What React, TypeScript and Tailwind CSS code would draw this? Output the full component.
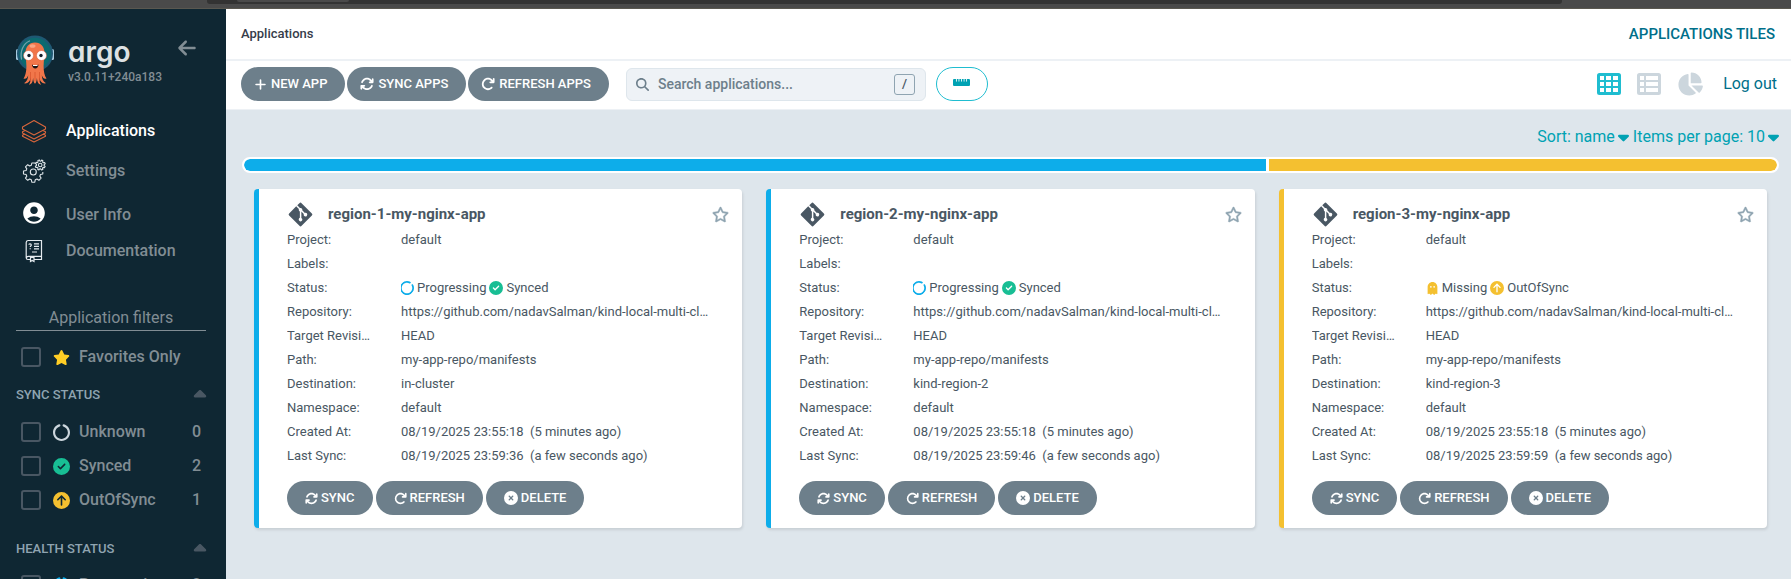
import { useState, type ReactNode } from 'react';
import { FaPlus, FaArrowsRotate, FaArrowRotateRight, FaCircleXmark, FaCircleCheck, FaCircleArrowUp, FaGhost, FaStar, FaRegStar, FaChartPie, FaCircleNotch, FaMagnifyingGlass, FaArrowLeft, FaCaretUp, FaCaretDown, FaRulerHorizontal, FaGitAlt } from 'react-icons/fa6';
import { MdAccountCircle } from 'react-icons/md';

function ArgoMascot() {
  return (
    <svg viewBox="0 0 40 52" className="h-[52px] w-10 shrink-0" aria-hidden="true">
      <rect x="1" y="15" width="4" height="11" rx="1.5" fill="#a9cbe0" />
      <rect x="35" y="15" width="4" height="11" rx="1.5" fill="#a9cbe0" />
      <circle cx="20" cy="19.500" r="18" fill="#1f5873" />
      <circle cx="20" cy="19.500" r="15.800" fill="#0c6a70" />
      <path d="M6.500 25C4.800 17 8.500 9.500 14.500 7" stroke="#6fa3ad" strokeWidth="1.300" fill="none" strokeLinecap="round" />
      <path d="M20 8.500c-6 0-9.500 4.500-9.500 10.500 0 5 .8 8 .9 13 .1 5-1 10-2.900 12.500 2.500.8 4-.8 4.700-3.200-.2 3.600-1.300 6.200-4.200 8 3.800.6 6-1.500 6.800-6 0 3.500-.6 5.600-1.900 7.500 2.700-.3 3.900-3 4.200-7 .2 2.600.5 5 1.900 6 1.400-1 1.700-3.400 1.900-6 .3 4 1.500 6.700 4.200 7-1.300-1.900-1.900-4-1.900-7.500.8 4.500 3 6.600 6.800 6-2.900-1.800-4-4.400-4.200-8 .7 2.400 2.200 4 4.700 3.200-1.900-2.500-3-7.500-2.900-12.500.1-5 .9-8 .9-13 0-6-3.500-10.500-9.500-10.500z" fill="#f1764a" />
      <ellipse cx="17.500" cy="12" rx="3" ry="1.800" fill="#f8a583" />
      <path d="M15.500 38v9M20 38v9M24.500 38v9" stroke="#d9552f" strokeWidth=".8" />
      <circle cx="13.500" cy="21.500" r="5" fill="#fff" stroke="#d9552f" strokeWidth=".5" />
      <circle cx="26.500" cy="21.500" r="5" fill="#fff" stroke="#d9552f" strokeWidth=".5" />
      <circle cx="14" cy="21.500" r="1.700" fill="#15202b" />
      <circle cx="26" cy="21.500" r="1.700" fill="#15202b" />
      <path d="M17 30.500c2 1.200 4.500 1.200 6.500 0-.3 2.600-1.500 4-3.200 4s-3-1.400-3.300-4z" fill="#1b1416" />
      <path d="M18 31h4.500v1H18z" fill="#fff" />
    </svg>
  );
}

function LayersIcon() {
  return (
    <svg viewBox="0 0 26 24" className="h-6 w-[26px]" fill="none" stroke="#d9663c" strokeWidth="1.100" strokeLinejoin="round" aria-hidden="true">
      <path d="M13 1.500 24.500 8v2L13 16 1.500 10V8z" />
      <path d="M4 11.500 1.500 12.800V14L13 20l11.500-6v-1.200L22 11.500" />
      <path d="M4 15 1.500 16.300v1L13 23l11.500-5.700v-1L22 15" />
    </svg>
  );
}

function GearsIcon() {
  return (
    <svg viewBox="0 0 24 24" className="size-6" fill="none" stroke="#dfe6ea" strokeWidth="1.100" strokeLinejoin="round" aria-hidden="true">
      <path d="M13.500 4.500 12.800 4 9.800 4l-.5 2.300-1.600.7-2-1.300-2.200 2.200 1.300 2-.7 1.600-2.600.5v3l2.600.5.700 1.600-1.300 2 2.200 2.200 2-1.300 1.600.7.500 2.500h3l.5-2.500 1.600-.7 2 1.300 2.200-2.200-1.300-2 .7-1.600 2.300-.5v-2" />
      <circle cx="11.300" cy="13" r="3" />
      <path d="m17.500 1 .4 1.200 1 .1L19.700 1l1.200.7-.3 1.300.7.700 1.300-.2.600 1.300-1.100.8v1l1 .8-.6 1.200-1.300-.2-.7.700.3 1.300-1.300.6-.8-1.100h-1l-.8 1-1.200-.6.300-1.300-.8-.7-1.300.2-.5-1.300 1.100-.8v-1l-1-.8.600-1.200 1.300.2.700-.7-.2-1.300z" />
      <circle cx="18.200" cy="6" r="1.800" />
    </svg>
  );
}

function DocsIcon() {
  return (
    <svg viewBox="0 0 18 24" className="h-6 w-[18px]" fill="none" stroke="#e4eaee" strokeWidth="1.200" aria-hidden="true">
      <path d="M6 20.500H3a1.800 1.800 0 0 1-1.800-1.800V3.500A2 2 0 0 1 3 1.500h13.500v19H9M1.500 19c0-1 .7-1.700 1.700-1.700h13.300" />
      <path d="M5.500 18.500v4l1.700-1 1.800 1v-4z" />
      <path d="M9 4.800h5M9 7.300h5M9 9.800h5M7 13h5" />
      <path d="M4 5.800c0-1.300 2.300-1.300 2.300.2 0 1-1.100.9-1.100 2.100M5.200 9.300v1" />
    </svg>
  );
}

function GridIcon() {
  return (
    <svg viewBox="0 0 24 22" className="h-[22px] w-6" aria-hidden="true">
      <path fillRule="evenodd" fill="currentColor" d="M2.500 0h19A2.500 2.500 0 0 1 24 2.500v17a2.500 2.500 0 0 1-2.500 2.500h-19A2.500 2.500 0 0 1 0 19.500v-17A2.500 2.500 0 0 1 2.500 0zM3 3v4h4V3zM9 3v4h5V3zM16 3v4h5V3zM3 9v4h4V9zM9 9v4h5V9zM16 9v4h5V9zM3 15v4h4v-4zM9 15v4h5v-4zM16 15v4h5v-4z" />
    </svg>
  );
}

function ListIcon() {
  return (
    <svg viewBox="0 0 24 22" className="h-[22px] w-6" aria-hidden="true">
      <path fillRule="evenodd" fill="currentColor" d="M2.500 0h19A2.500 2.500 0 0 1 24 2.500v17a2.500 2.500 0 0 1-2.500 2.500h-19A2.500 2.500 0 0 1 0 19.500v-17A2.500 2.500 0 0 1 2.500 0zM3 3v4h4V3zM9 3v4h12V3zM3 9v4h4V9zM9 9v4h12V9zM3 15v4h4v-4zM9 15v4h12v-4z" />
    </svg>
  );
}

function NavItem({ icon, label, active, className }: { icon: ReactNode; label: string; active?: boolean; className: string }) {
  return (
    <a href="#" className={`flex items-center ${className} ${active ? 'text-white' : 'text-[#818d94]'}`}>
      <span className="flex w-9 shrink-0 justify-center">{icon}</span>
      <span className="ml-[14px]">{label}</span>
    </a>
  );
}

function FilterRow({ icon, label, count }: { icon: ReactNode; label: string; count?: number }) {
  return (
    <label className="flex h-[34px] items-center pr-[5px] pl-[5px]">
      <input type="checkbox" className="size-5 shrink-0 appearance-none rounded-[3px] border-2 border-[#495763] checked:bg-[#495763]" />
      <span className="ml-3 flex w-[17px] shrink-0 justify-center">{icon}</span>
      <span className="ml-[9px] flex-1">{label}</span>
      {count !== undefined && <span>{count}</span>}
    </label>
  );
}

function SectionTitle({ children }: { children: ReactNode }) {
  return (
    <button type="button" className="flex h-6 w-full items-center justify-between text-[13px] text-[#8fa4b1]">
      {children}
      <FaCaretUp className="-mr-1 size-5 text-[#495763]" />
    </button>
  );
}

function Sidebar() {
  return (
    <aside className="w-[226px] shrink-0 overflow-hidden bg-[#0f2733] pr-5 pl-4 text-[16px] leading-5 font-medium text-[#818d94]">
      <div className="flex pt-[25px]">
        <div className="-ml-px">
          <ArgoMascot />
        </div>
        <div className="ml-[13px] flex-1">
          <div className="mt-[2px] h-8 font-[Inter,sans-serif] text-[28px] leading-8 font-semibold text-[#dde1e3] [font-feature-settings:'cv11']">argo</div>
          <div className="mt-px text-[12px] leading-4">v3.0.11+240a183</div>
        </div>
        <button type="button" aria-label="Collapse sidebar" className="mr-[9px] -ml-6 h-7 self-start">
          <FaArrowLeft className="size-5" />
        </button>
      </div>
      <nav className="mt-[25px]">
        <NavItem className="h-10" active icon={<LayersIcon />} label="Applications" />
        <NavItem className="h-10" icon={<GearsIcon />} label="Settings" />
        <NavItem className="h-12" icon={<MdAccountCircle className="mb-1 size-[26px] text-white" />} label="User Info" />
        <NavItem className="h-6" icon={<DocsIcon />} label="Documentation" />
      </nav>
      <h2 className="mt-[45px] border-b border-[#818d94] pb-[2px] text-center font-normal">Application filters</h2>
      <div className="mt-[9px]">
        <FilterRow icon={<FaStar className="size-[17px] text-[#ffce25]" />} label="Favorites Only" />
      </div>
      <section className="mt-[9px]">
        <SectionTitle>SYNC STATUS</SectionTitle>
        <div className="mt-2">
          <FilterRow icon={<FaCircleNotch className="size-[17px] text-[#ccd6dd]" />} label="Unknown" count={0} />
          <FilterRow icon={<FaCircleCheck className="size-[17px] text-[#18be94]" />} label="Synced" count={2} />
          <FilterRow icon={<FaCircleArrowUp className="size-[17px] text-[#f4c030]" />} label="OutOfSync" count={1} />
        </div>
      </section>
      <section className="mt-5">
        <SectionTitle>HEALTH STATUS</SectionTitle>
        <div className="mt-[7px]">
          <FilterRow icon={<FaCircleNotch className="size-[17px] text-[#0dadea]" />} label="Progressing" count={2} />
        </div>
      </section>
    </aside>
  );
}

function ToolButton({ icon, children }: { icon: ReactNode; children: ReactNode }) {
  return (
    <button type="button" className="flex h-[34px] items-center gap-1 rounded-full bg-[#6d7f8b] pr-[18px] pl-[13px] text-[13px] font-medium text-white">
      {icon}
      {children}
    </button>
  );
}

function CardButton({ icon, children }: { icon: ReactNode; children: ReactNode }) {
  return (
    <button type="button" className="flex h-[34px] items-center gap-[3px] rounded-full bg-[#6d7f8b] px-[18px] text-[13px] font-medium text-white">
      {icon}
      {children}
    </button>
  );
}

interface AppInfo {
  name: string;
  healthy: boolean;
  destination: string;
  lastSync: string;
}

const apps: AppInfo[] = [
  { name: 'region-1-my-nginx-app', healthy: true, destination: 'in-cluster', lastSync: '08/19/2025 23:59:36' },
  { name: 'region-2-my-nginx-app', healthy: true, destination: 'kind-region-2', lastSync: '08/19/2025 23:59:46' },
  { name: 'region-3-my-nginx-app', healthy: false, destination: 'kind-region-3', lastSync: '08/19/2025 23:59:59' },
];

function Status({ healthy }: { healthy: boolean }) {
  return healthy ? (
    <span className="flex items-center gap-[3px]">
      <FaCircleNotch className="-ml-px size-[14px] rotate-45 text-[#0dadea]" />
      Progressing
      <FaCircleCheck className="size-[14px] text-[#18be94]" />
      Synced
    </span>
  ) : (
    <span className="flex items-center gap-[3px]">
      <FaGhost className="h-[13px] w-[13px] text-[#f4c030]" />
      Missing
      <FaCircleArrowUp className="size-[14px] text-[#f4c030]" />
      OutOfSync
    </span>
  );
}

function AppCard({ app }: { app: AppInfo }) {
  const [favorite, setFavorite] = useState(false);
  const rows: [string, ReactNode][] = [
    ['Project:', 'default'],
    ['Labels:', ''],
    ['Status:', <Status healthy={app.healthy} />],
    ['Repository:', 'https://github.com/nadavSalman/kind-local-multi-cluster-argocd'],
    ['Target Revision:', 'HEAD'],
    ['Path:', 'my-app-repo/manifests'],
    ['Destination:', app.destination],
    ['Namespace:', 'default'],
    ['Created At:', <>08/19/2025 23:55:18 &nbsp;(5 minutes ago)</>],
    ['Last Sync:', <>{app.lastSync} &nbsp;(a few seconds ago)</>],
  ];
  return (
    <article className={`min-w-0 rounded-[4px] border-l-[5px] bg-white pt-3 pr-[13px] pb-[13px] pl-7 text-[#495763] shadow-[1px_2px_3px_rgba(0,0,0,0.1)] ${app.healthy ? 'border-[#0dadea]' : 'border-[#f4c030]'}`}>
      <header className="flex h-[26px] items-center">
        <FaGitAlt className="size-[27px] shrink-0" />
        <h3 className="ml-[14px] flex-1 truncate text-[15px] leading-5 font-bold">{app.name}</h3>
        <button type="button" aria-label="Toggle favorite" aria-pressed={favorite} onClick={() => setFavorite(!favorite)} className="text-[#8fa4b1]">
          {favorite ? <FaStar className="size-[17px]" /> : <FaRegStar className="size-[17px]" stroke="currentColor" strokeWidth={14} />}
        </button>
      </header>
      <dl className="pt-px pr-[18px] text-[13px] leading-6">
        {rows.map(([key, value]) => (
          <div key={key} className="flex h-6">
            <dt className="mr-[30px] w-[84px] shrink-0 truncate">{key}</dt>
            <dd className="min-w-0 flex-1 truncate">{value}</dd>
          </div>
        ))}
      </dl>
      <div className="mt-[13px] flex gap-[3px]">
        <CardButton icon={<FaArrowsRotate className="size-[13px]" />}>SYNC</CardButton>
        <CardButton icon={<FaArrowRotateRight className="size-[13px]" />}>REFRESH</CardButton>
        <CardButton icon={<FaCircleXmark className="size-[14px]" />}>DELETE</CardButton>
      </div>
    </article>
  );
}

export default function App() {
  return (
    <div className="flex h-screen flex-col overflow-hidden font-[Roboto,sans-serif]">
      <div className="h-[9px] shrink-0 border-b border-[#5a5850] bg-[#4a4a4a] pr-[229px] pl-[207px]">
        <div className="h-1 rounded-b-[3px] bg-[#333333] pl-[30px]">
          <div className="h-[2px] w-[112px] rounded-b-[2px] bg-[#4a4a4a]" />
        </div>
      </div>
      <div className="flex min-h-0 flex-1">
        <Sidebar />
        <main className="min-w-0 flex-1 bg-[#dee6ec]">
          <div className="flex h-[52px] items-center justify-between border-b-2 border-[#edf1f5] bg-white pr-4 pl-[15px] font-medium">
            <h1 className="text-[13px] text-[#363c4a]">Applications</h1>
            <span className="text-[15px] text-[#006f8a]">APPLICATIONS TILES</span>
          </div>
          <div className="flex h-[49px] items-center border-b border-[#edf1f5] bg-white pr-[14px] pb-[2px] pl-[15px]">
            <div className="flex gap-[2px]">
              <ToolButton icon={<FaPlus className="size-[13px]" />}>NEW APP</ToolButton>
              <ToolButton icon={<FaArrowsRotate className="size-[14px]" />}>SYNC APPS</ToolButton>
              <ToolButton icon={<FaArrowRotateRight className="size-[14px]" />}>REFRESH APPS</ToolButton>
            </div>
            <label className="ml-[17px] flex h-[33px] w-[300px] items-center rounded-[6px] border border-[#dee6ec] bg-[#eef2f6] pr-[10px] pl-[9px] text-[#6d7f8b]">
              <FaMagnifyingGlass className="size-[13px] shrink-0" />
              <input type="text" aria-label="Search applications" placeholder="Search applications..." className="ml-[9px] min-w-0 flex-1 bg-transparent text-[14px] font-medium outline-none placeholder:text-[#6d7f8b]" />
              <kbd className="flex size-[21px] items-center justify-center rounded-[3px] border border-[#8fa4b1] font-[Roboto,sans-serif] text-[13px] font-medium text-[#495763]">/</kbd>
            </label>
            <button type="button" aria-label="Toggle health status bar" className="ml-[10px] flex h-[34px] w-[52px] items-center justify-center rounded-full border border-[#1fbdd0] pb-1 text-[#00a2b3]">
              <FaRulerHorizontal className="size-[17px]" />
            </button>
            <div className="ml-auto flex items-center text-[#ccd6dd]">
              <button type="button" aria-label="Tiles" className="text-[#1fbdd0]"><GridIcon /></button>
              <button type="button" aria-label="List" className="ml-4"><ListIcon /></button>
              <button type="button" aria-label="Summary" className="ml-4"><FaChartPie className="size-[26px]" /></button>
              <a href="#" className="ml-5 text-[16px] text-[#006f8a]">Log out</a>
            </div>
          </div>
          <div className="pr-3 pl-4">
            <div className="flex h-[47px] items-center justify-end gap-1 pt-[6px] text-[16px] text-[#00a2b3]">
              <button type="button" className="flex items-center gap-[3px]">Sort: name <FaCaretDown className="h-[18px] w-[11px]" /></button>
              <button type="button" className="flex items-center gap-[3px]">Items per page: 10 <FaCaretDown className="h-[18px] w-[11px]" /></button>
            </div>
            <div className="flex h-4 gap-[3px] overflow-hidden rounded-full border-2 border-white bg-white">
              <div className="w-2/3 shrink-0 rounded-l-full bg-[#0dadea]" />
              <div className="flex-1 rounded-r-full bg-[#f4c030]" />
            </div>
            <div className="mt-4 grid grid-cols-3 gap-6 px-3">
              {apps.map((app) => (
                <AppCard key={app.name} app={app} />
              ))}
            </div>
          </div>
        </main>
      </div>
    </div>
  );
}
